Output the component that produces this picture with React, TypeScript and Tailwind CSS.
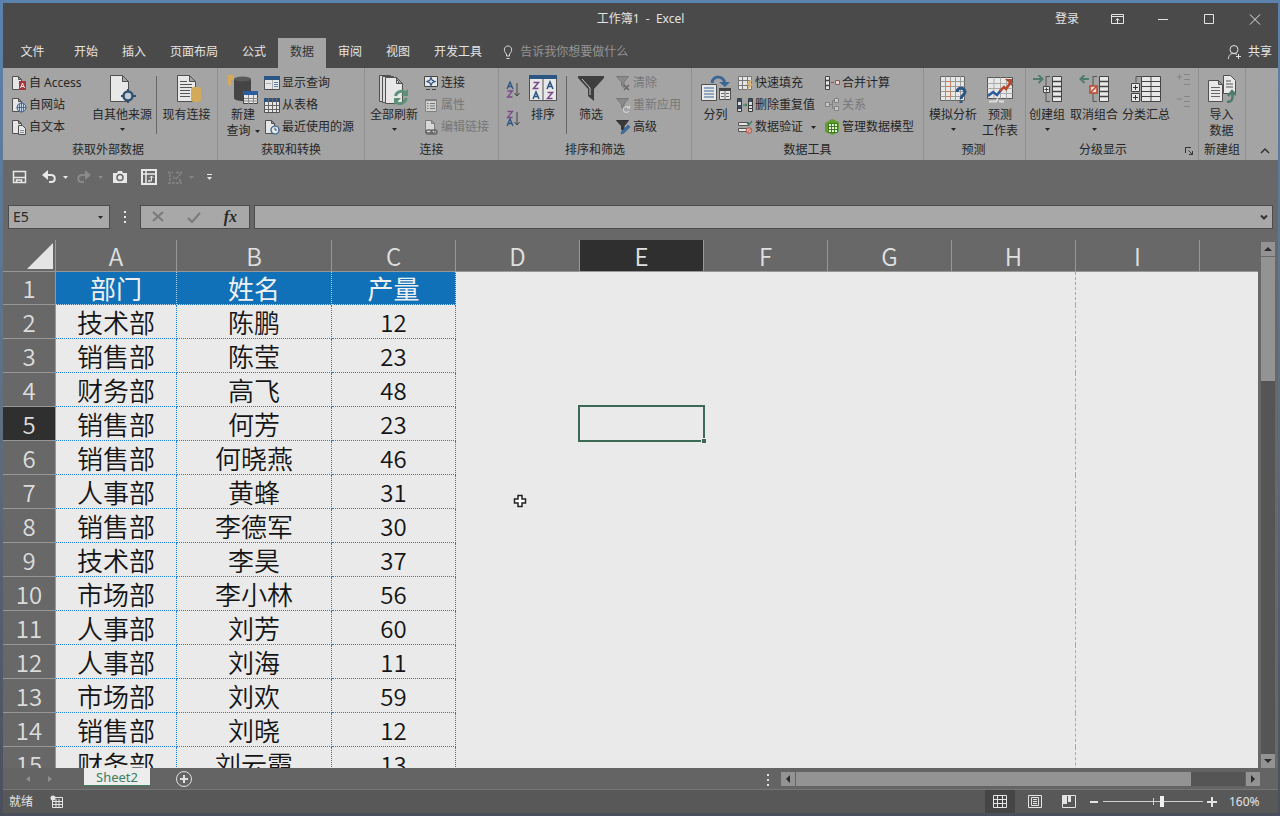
import React, { useState } from "react";

const COLUMNS = ["A", "B", "C", "D", "E", "F", "G", "H", "I", ""];

const ROWS: [string, string, string][] = [
  ["部门", "姓名", "产量"],
  ["技术部", "陈鹏", "12"],
  ["销售部", "陈莹", "23"],
  ["财务部", "高飞", "48"],
  ["销售部", "何芳", "23"],
  ["销售部", "何晓燕", "46"],
  ["人事部", "黄蜂", "31"],
  ["销售部", "李德军", "30"],
  ["技术部", "李昊", "37"],
  ["市场部", "李小林", "56"],
  ["人事部", "刘芳", "60"],
  ["人事部", "刘海", "11"],
  ["市场部", "刘欢", "59"],
  ["销售部", "刘晓", "12"],
  ["财务部", "刘云霞", "13"],
];

const TABS = ["开始", "插入", "页面布局", "公式", "数据", "审阅", "视图", "开发工具"];

type IconProps = { children: React.ReactNode; size?: number; className?: string };

function Icon({ children, size = 16, className = "" }: IconProps) {
  return (
    <svg
      width={size}
      height={size}
      viewBox={`0 0 ${size} ${size}`}
      fill="none"
      aria-hidden="true"
      className={`shrink-0 ${className}`}
    >
      {children}
    </svg>
  );
}

function Caret({ className = "" }: { className?: string }) {
  return (
    <svg width="5" height="3" viewBox="0 0 5 3" aria-hidden="true" className={`shrink-0 ${className}`}>
      <path d="M0 0h5L2.5 3z" fill="currentColor" />
    </svg>
  );
}

/* ---------- 16px ribbon icons ---------- */

const Page = () => <path d="M1.5 1.5h6l3 3v10h-9z M7.5 1.5v3h3" fill="#e6e6e6" stroke="#505050" />;

const AccessIcon = () => (
  <Icon>
    <Page />
    <rect x="8" y="6" width="7" height="9" fill="#a4373a" />
    <path d="M9.5 13l2-5 2 5M10.3 11.5h2.5" stroke="#eee" />
  </Icon>
);

const WebIcon = () => (
  <Icon>
    <Page />
    <circle cx="10.5" cy="10.5" r="4.5" fill="#c9d4df" stroke="#2f5b88" />
    <path d="M6 10.5h9M10.5 6v9M8.5 7v7M12.5 7v7" stroke="#2f5b88" strokeWidth=".8" />
  </Icon>
);

const TextIcon = () => (
  <Icon>
    <Page />
    <path d="M7.5 6.5h4l3 3v6h-7z" fill="#e6e6e6" stroke="#505050" />
    <path d="M9 11.5h4M9 13.5h4" stroke="#777" strokeWidth=".8" />
  </Icon>
);

const ShowQueryIcon = () => (
  <Icon>
    <path d="M.5 1.5h15v13H.5z" fill="#e6e6e6" stroke="#505050" />
    <path d="M0 1h16v4H0z" fill="#2b5583" />
    <path d="M10 7.5h4M10 9.5h4M10 11.5h4" stroke="#5b82a8" />
    <path d="M8.5 5v9M2 8.5h5" stroke="#aaa" />
  </Icon>
);

const TableIcon = () => (
  <Icon>
    <path d="M.5 1.5h15v14H.5z" fill="#e6e6e6" stroke="#505050" />
    <path d="M0 1h16v4H0z" fill="#2b5583" />
    <path d="M.5 8.5h15M.5 12.5h15M4.5 1v14M8.5 1v14M12.5 1v14" stroke="#666" />
  </Icon>
);

const RecentIcon = () => (
  <Icon>
    <Page />
    <circle cx="11" cy="11" r="4" fill="#e6e6e6" stroke="#2f5b88" strokeWidth="1.2" />
    <path d="M11 8.5V11h2" stroke="#2f5b88" />
  </Icon>
);

const LinkIcon = () => (
  <Icon>
    <path d="M1.5 1.5h13v10h-13z" fill="#e6e6e6" stroke="#454545" />
    <path d="M8 2.5l1.2 2.8L12 6.500 9.200 7.700 8 10.500 6.800 7.700 4 6.500l2.800-1.200z" stroke="#2b5583" strokeWidth="1.2" />
    <path d="M3 14.500h4M9 14.500h4" stroke="#454545" />
  </Icon>
);

const PropertiesIcon = () => (
  <Icon>
    <path d="M2.5 2.5h11v12h-11z" fill="#d0d0d0" stroke="#828282" />
    <path d="M2 3h12" stroke="#808080" strokeWidth="2" />
    <path d="M4 6.5h1.5M7 6.5h5M4 9h1.5M7 9h5M4 11.5h1.5M7 11.5h5" stroke="#777" />
  </Icon>
);

const EditLinksIcon = () => (
  <Icon>
    <path d="M2.5 1.5h6l3 3v9h-9z M8.5 1.5v3h3" fill="#d8d8d8" stroke="#7c7c7c" />
    <rect x="3" y="11" width="6" height="4" rx="2" stroke="#666" strokeWidth="1.5" />
    <rect x="8" y="11" width="6" height="4" rx="2" stroke="#666" strokeWidth="1.5" />
  </Icon>
);

const FUNNEL = "M1.5 1.5h12L9 7v5.5l-2.500-2V7z";

const ClearIcon = () => (
  <Icon>
    <path d={FUNNEL} fill="#8a8a8a" stroke="#777" />
    <path d="M9 10l5 5M14 10l-5 5" stroke="#666" strokeWidth="1.5" />
  </Icon>
);

const ReapplyIcon = () => (
  <Icon>
    <path d={FUNNEL} fill="#8a8a8a" stroke="#777" />
    <path d="M14 11a3 3 0 1 0 0 3M14.500 8.500V11H12" stroke="#d0d0d0" strokeWidth="1.2" />
  </Icon>
);

const AdvancedIcon = () => (
  <Icon>
    <path d={FUNNEL} fill="#3a3a3a" stroke="#333" />
    <path d="M6 15l1-3 6-6 2 2-6 6z" fill="#3c6ea5" stroke="#2b5583" strokeWidth=".6" />
  </Icon>
);

const FlashFillIcon = () => (
  <Icon>
    <path d="M1.5 1.5h13v13h-13z" fill="#e6e6e6" stroke="#777" />
    <path d="M1.5 5.5h13M1.5 10.5h13M5.5 1.5v13M10.5 1.5v13" stroke="#777" />
    <path d="M13 5l-4 5h3l-2 6 6-7h-3l2-4z" fill="#d9b26a" />
  </Icon>
);

const DedupeIcon = () => (
  <Icon>
    <path d="M.5 1.5h4v13h-4zM11.500 1.500h4v13h-4z" fill="#dcdcdc" stroke="#3c3c3c" />
    <path d="M1 2h3v3H1zM1 8h3v3H1zM12 2h3v3h-3z" fill="#3b4f66" />
    <path d="M12 8.500h3M12 11.500h3M1 11.500h3" stroke="#3c3c3c" />
    <path d="M6 8h4M8.500 6.500L10 8 8.500 9.500" stroke="#2b7a55" />
  </Icon>
);

const ValidationIcon = () => (
  <Icon>
    <path d="M1.5 3.5h10v3h-10zM1.5 9.5h10v3h-10z" fill="#e6e6e6" stroke="#555" />
    <path d="M10 4l2 2 3-4" stroke="#3b7d5c" strokeWidth="1.3" />
    <circle cx="12" cy="11.500" r="2.800" fill="#d9b5ab" stroke="#b5523b" />
    <path d="M10.200 13.500l3.600-4" stroke="#b5523b" />
  </Icon>
);

const ConsolidateIcon = () => (
  <Icon>
    <path d="M1.5 1.5h4v13h-4z" fill="#e6e6e6" stroke="#444" />
    <path d="M1.5 5.5h4M1.5 10.5h4" stroke="#444" strokeWidth="1.5" />
    <path d="M7 7.5h3" stroke="#a44" />
    <path d="M11.5 5.5h4v4h-4z" fill="#e2d5d3" stroke="#8d5a55" />
  </Icon>
);

const RelationIcon = () => (
  <Icon>
    <path d="M1.5 5.5h4v4h-4zM10.5 1.5h4v4h-4zM10.5 9.5h4v4h-4z" fill="#c8c8c8" stroke="#808080" />
    <path d="M6 7.5h2.5M10 3.5H8.5v8H10" stroke="#808080" />
  </Icon>
);

const DataModelIcon = () => (
  <Icon>
    <path d="M8 0l7 3v9l-6 4-8-3V4z" fill="#5f9e2f" />
    <path d="M4.5 4.5h9v9h-9z" fill="#e4eedb" stroke="#3f7a1d" />
    <path d="M4.5 7.5h9M4.5 10.5h9M7.5 4.5v9M10.5 4.5v9" stroke="#3f7a1d" />
  </Icon>
);

function SortIcon({ desc = false }: { desc?: boolean }) {
  return (
    <svg width="15" height="17" viewBox="0 0 15 17" fill="none" aria-hidden="true">
      <path
        d={desc ? "M1 16l3-7 3 7M2 13.5h4" : "M1 8l3-7 3 7M2 5.5h4"}
        stroke="#2b5583"
        strokeWidth="1.3"
      />
      <path d={desc ? "M1.5 1.500h5l-5 6h5" : "M1.5 10h5l-5 6h5"} stroke="#7a4a8c" strokeWidth="1.3" />
      <path d="M11 2v13M8.500 12l2.500 3 2.500-3" stroke="#444" />
    </svg>
  );
}

/* ---------- 28px ribbon icons ---------- */

const OtherSourcesIcon = () => (
  <Icon size={28}>
    <path d="M2.5.5h12l6 6v20h-18z M14.5.5v6h6" fill="#e8e8e8" stroke="#505050" />
    <path d="M20 14v14M13 21h15" stroke="#2f5170" strokeWidth="2" />
    <circle cx="20" cy="21" r="4.5" fill="#c3ccd4" stroke="#2f5170" strokeWidth="2.500" />
  </Icon>
);

const ExistingIcon = () => (
  <Icon size={28}>
    <path d="M4.5.5h12l6 6v20h-18z M16.5.5v6h6" fill="#e8e8e8" stroke="#505050" />
    <path d="M7 6.5h7M7 9.5h12M7 12.5h12M7 15.5h10M7 18.5h10M7 21.5h10" stroke="#555" />
    <rect x="18" y="12" width="10" height="15" rx="3" fill="#d3a95a" />
  </Icon>
);

const NewQueryIcon = () => (
  <Icon size={32}>
    <path d="M1 0h6v5H4v5H1z" fill="#d3a95a" />
    <path d="M7 4v19c0 2 4 3 9 3s8-1 8-3V4z" fill="#454545" />
    <ellipse cx="15.500" cy="4" rx="8.500" ry="2.500" fill="#5a5a5a" />
    <path d="M16.5 16.5h14v12h-14z" fill="#e8e8e8" stroke="#444" />
    <path d="M16 16h15v4H16z" fill="#2b5da0" />
    <path d="M17 23.500h14M17 26h14M21.500 20v9M26.500 20v9" stroke="#888" />
  </Icon>
);

const RefreshIcon = () => (
  <Icon size={30}>
    <path d="M.5.5h11l5 5v21H.5z" fill="#dcdcdc" stroke="#505050" />
    <path d="M3.5 1.5h11l5 5v21h-16z" fill="#dcdcdc" stroke="#505050" />
    <path d="M6.5 2.5h11l6 6v20h-17z M17.5 2.5v6h6" fill="#e8e8e8" stroke="#505050" />
    <path d="M16.500 21a6 6 0 0 1 10-3M27 23a6 6 0 0 1-10 4" stroke="#5d8f79" strokeWidth="3" />
    <path d="M29 14v7h-7zM15 30v-7h7z" fill="#5d8f79" />
  </Icon>
);

const SortDialogIcon = () => (
  <Icon size={28}>
    <path d="M.5.5h27v25H.5z" fill="#e8e8e8" stroke="#505050" />
    <path d="M0 0h28v4H0z" fill="#2b5583" />
    <path d="M14 4v22" stroke="#555" />
    <path d="M4.5 7.5h5l-5 6h5M18.5 17.5h5l-5 6h5" stroke="#7a4a8c" strokeWidth="1.5" />
    <path d="M4 24l3-7 3 7M5 21.5h4M18 14l3-7 3 7M19 11.5h4" stroke="#2b5583" strokeWidth="1.5" />
  </Icon>
);

const FilterIcon = () => (
  <Icon size={28}>
    <path d="M1 1h26v2L17 14v12l-6-5v-7L1 3z" fill="#3f3f3f" />
    <path d="M5 4l8 9v7" stroke="#c8c8c8" />
  </Icon>
);

const SplitIcon = () => (
  <Icon size={30}>
    <path d="M11 8c1-8 12-8 13 1" stroke="#3a6798" strokeWidth="3" />
    <path d="M18 7h11l-5 5z" fill="#3a6798" />
    <path d="M.5 9.5h15v16H.5zM18.5 13.5h11v11h-11z" fill="#e8e8e8" stroke="#505050" />
    <path d="M3 13h10M3 16h10M3 19h10M3 22h10" stroke="#3a6798" />
    <path d="M18 13h12v3H18z" fill="#444" />
    <path d="M24 16v9M20 18.5h3M20 21.5h3M25 18.5h3M25 21.5h3" stroke="#666" />
  </Icon>
);

const WhatIfIcon = () => (
  <Icon size={28}>
    <path d="M1.5 1.5h24v24h-24z" fill="#e8e8e8" stroke="#666" />
    <path d="M1.5 6.5h24M1.5 11.5h24M1.5 16.5h24M1.5 21.5h24M6.5 1.5v24M11.5 1.5v24M16.5 1.5v24M21.5 1.5v24" stroke="#9a9a9a" />
    <path d="M6.5 6.5h5v5h-5zM6.500 16.500h5v5h-5z" stroke="#c98256" />
    <path d="M18 17c0-5 8-5 8 0 0 3-4 3-4 7" stroke="#2b5583" strokeWidth="3" />
    <path d="M20.5 25.5h3V28h-3z" fill="#2b5583" />
  </Icon>
);

const ForecastIcon = () => (
  <Icon size={28}>
    <path d="M1.5 2.5h25v21h-25z" fill="#e8e8e8" stroke="#555" />
    <path d="M1.5 8.5h25M1.5 13.5h25M1.5 18.5h25M8 2.5v21M14.5 2.5v21M20.5 2.5v21" stroke="#aaa" />
    <path d="M2 21l5-4 4 3 4-5" stroke="#2b5da0" strokeWidth="2.5" />
    <path d="M14 16l4-4 2 2 5-7" stroke="#b8472b" strokeWidth="2.5" />
    <path d="M19 4h7v7z" fill="#b8472b" />
    <path d="M3 26.500h7l2-3M13 26.500h5" stroke="#ddd" strokeWidth="2" />
  </Icon>
);

const GroupIcon = () => (
  <Icon size={30}>
    <path d="M1 4h9M6.5 0l4 4-4 4" stroke="#4f7d69" strokeWidth="2" />
    <path d="M18 1.5h-4v25h4" stroke="#555" />
    <path d="M11.5 11.5h6v6h-6z" fill="#e8e8e8" stroke="#444" />
    <path d="M14.5 12.5v4M12.500 14.500h4" stroke="#444" />
    <path d="M20.5 1.5h9v25h-9z" fill="#e8e8e8" stroke="#444" />
    <path d="M20.5 6.5h9M20.5 11.5h9M20.5 16.5h9M20.5 21.5h9" stroke="#444" strokeWidth="1.5" />
  </Icon>
);

const UngroupIcon = () => (
  <Icon size={30}>
    <path d="M10 4H2M5.5 0l-4 4 4 4" stroke="#4f7d69" strokeWidth="2" />
    <path d="M18 1.5h-4v25h4" stroke="#555" />
    <path d="M11 11h7v7h-7z" fill="#e8dcd8" stroke="#b8472b" strokeWidth="1.5" />
    <path d="M12 17l5-5" stroke="#b8472b" strokeWidth="1.5" />
    <path d="M20.5 1.5h9v25h-9z" fill="#e8e8e8" stroke="#444" />
    <path d="M20.5 6.5h9M20.5 11.5h9M20.5 16.5h9M20.5 21.5h9" stroke="#444" strokeWidth="1.5" />
  </Icon>
);

const SubtotalIcon = () => (
  <Icon size={30}>
    <path d="M10 1.5H5v6" stroke="#555" />
    <path d="M10.5 1.5h19v25h-19z" fill="#e8e8e8" stroke="#444" />
    <path d="M10.5 6.5h19M10.5 11.5h19M10.5 16.5h19M10.5 21.5h19M20 1.5v25" stroke="#444" />
    <path d="M.5 8.5h8v8h-8zM.5 18.5h8v8h-8z" fill="#e8e8e8" stroke="#444" />
    <path d="M4.5 10v5M2 12.5h5M4.5 20v5M2 22.5h5" stroke="#333" />
  </Icon>
);

const ImportIcon = () => (
  <Icon size={28}>
    <path d="M15.5.5h7l5 5v13h-12z" fill="#e8e8e8" stroke="#505050" />
    <path d="M18 6h5M18 9h7M18 12h7" stroke="#555" />
    <path d="M.5 5.5h10l4 4v17H.5z M10.5 5.5v4h4" fill="#e8e8e8" stroke="#505050" />
    <path d="M3 12.5h9M3 15.5h9M3 18.5h9M3 21.5h9" stroke="#666" />
    <path d="M19 27c6 0 6-4 5-9M20 21l4-5 4 4" stroke="#4f7d69" strokeWidth="2.5" />
  </Icon>
);

/* ---------- ribbon pieces ---------- */

type LargeProps = { icon: React.ReactNode; label: string; second?: string; caret?: boolean; className?: string };

function LargeButton({ icon, label, second, caret, className = "" }: LargeProps) {
  return (
    <button type="button" className={`flex shrink-0 flex-col items-center whitespace-nowrap pt-[3px] ${className}`}>
      <span className="flex h-7 items-start justify-center">{icon}</span>
      <span className="mt-1 h-4 leading-4">{label}</span>
      <span className={`flex items-center gap-1 leading-4 ${second ? "h-4" : "h-3"}`}>
        {second}
        {caret && <Caret />}
      </span>
    </button>
  );
}

type SmallProps = { icon: React.ReactNode; label: string; disabled?: boolean; caret?: boolean };

function SmallButton({ icon, label, disabled, caret }: SmallProps) {
  return (
    <button
      type="button"
      disabled={disabled}
      className="flex h-[22px] items-center gap-[2px] whitespace-nowrap disabled:text-[#777]"
    >
      {icon}
      {label}
      {caret && <Caret className="ml-1.5" />}
    </button>
  );
}

type GroupProps = { title: string; children: React.ReactNode; className?: string; bodyClass?: string; titleClass?: string };

function Group({ title, children, className = "", bodyClass = "", titleClass = "" }: GroupProps) {
  return (
    <section aria-label={title} className={`flex shrink-0 flex-col border-r border-[#8f8f8f] pt-1 ${className}`}>
      <div className={`flex h-[66px] items-start ${bodyClass}`}>{children}</div>
      <div className={`h-[22px] text-center leading-6 ${titleClass}`}>{title}</div>
    </section>
  );
}

const Divider = ({ className = "" }: { className?: string }) => (
  <span className={`mt-1 h-[58px] w-px shrink-0 bg-[#666] ${className}`} />
);

function Ribbon() {
  return (
    <div className="flex h-[92px] overflow-hidden bg-[#a4a4a4] text-[12px] text-[#262626]">
      <Group title="获取外部数据" className="w-[215px]" bodyClass="pl-2" titleClass="pr-1">
        <div className="w-[77px]">
          <SmallButton icon={<AccessIcon />} label="自 Access" />
          <SmallButton icon={<WebIcon />} label="自网站" />
          <SmallButton icon={<TextIcon />} label="自文本" />
        </div>
        <LargeButton icon={<OtherSourcesIcon />} label="自其他来源" caret className="w-[68px]" />
        <Divider />
        <LargeButton icon={<ExistingIcon />} label="现有连接" className="w-[59px]" />
      </Group>
      <Group title="获取和转换" className="w-[147px]" bodyClass="pl-1">
        <LargeButton icon={<NewQueryIcon />} label="新建" second="查询" caret className="w-[42px]" />
        <div>
          <SmallButton icon={<ShowQueryIcon />} label="显示查询" />
          <SmallButton icon={<TableIcon />} label="从表格" />
          <SmallButton icon={<RecentIcon />} label="最近使用的源" />
        </div>
      </Group>
      <Group title="连接" className="w-[134px]" bodyClass="pl-1">
        <LargeButton icon={<RefreshIcon />} label="全部刷新" caret className="mr-1 w-[50px]" />
        <div>
          <SmallButton icon={<LinkIcon />} label="连接" />
          <SmallButton icon={<PropertiesIcon />} label="属性" disabled />
          <SmallButton icon={<EditLinksIcon />} label="编辑链接" disabled />
        </div>
      </Group>
      <Group title="排序和筛选" className="w-[193px]" bodyClass="pl-[7px]">
        <div className="flex w-[18px] flex-col gap-3 pt-[9px]">
          <button type="button" aria-label="升序">
            <SortIcon />
          </button>
          <button type="button" aria-label="降序">
            <SortIcon desc />
          </button>
        </div>
        <LargeButton icon={<SortDialogIcon />} label="排序" className="w-[38px]" />
        <Divider className="ml-1" />
        <LargeButton icon={<FilterIcon />} label="筛选" className="w-[48px]" />
        <div>
          <SmallButton icon={<ClearIcon />} label="清除" disabled />
          <SmallButton icon={<ReapplyIcon />} label="重新应用" disabled />
          <SmallButton icon={<AdvancedIcon />} label="高级" />
        </div>
      </Group>
      <Group title="数据工具" className="w-[232px]" bodyClass="pl-0.5">
        <LargeButton icon={<SplitIcon />} label="分列" className="w-[43px]" />
        <div className="w-[87px]">
          <SmallButton icon={<FlashFillIcon />} label="快速填充" />
          <SmallButton icon={<DedupeIcon />} label="删除重复值" />
          <SmallButton icon={<ValidationIcon />} label="数据验证" caret />
        </div>
        <div>
          <SmallButton icon={<ConsolidateIcon />} label="合并计算" />
          <SmallButton icon={<RelationIcon />} label="关系" disabled />
          <SmallButton icon={<DataModelIcon />} label="管理数据模型" />
        </div>
      </Group>
      <Group title="预测" className="w-[102px]" bodyClass="pl-0.5" titleClass="pr-0.5">
        <LargeButton icon={<WhatIfIcon />} label="模拟分析" caret className="w-[54px]" />
        <LargeButton icon={<ForecastIcon />} label="预测" second="工作表" className="w-10" />
      </Group>
      <Group title="分级显示" className="relative w-[173px]" titleClass="pr-[18px]">
        <LargeButton icon={<GroupIcon />} label="创建组" caret className="w-[42px]" />
        <LargeButton icon={<UngroupIcon />} label="取消组合" caret className="w-[52px]" />
        <LargeButton icon={<SubtotalIcon />} label="分类汇总" className="w-[52px]" />
        <div className="flex flex-col gap-1.5 pl-1 text-[#858585]">
          <button type="button" aria-label="显示明细数据" disabled>
            <Icon>
              <path d="M1 5h5M3.5 2.5v5M8 2.5h6M8 7.5h6M8 12.5h6" stroke="currentColor" />
            </Icon>
          </button>
          <button type="button" aria-label="隐藏明细数据" disabled>
            <Icon>
              <path d="M1 5h5M8 2.5h6M8 7.5h6M8 12.5h6" stroke="currentColor" />
            </Icon>
          </button>
        </div>
        <button type="button" aria-label="分级显示设置" className="absolute bottom-1 right-1">
          <Icon size={10}>
            <path d="M1.5 7V1.5H7M4.500 4.500l4 4M8.500 5v3.500H5" stroke="#333" />
          </Icon>
        </button>
      </Group>
      <Group title="新建组" className="w-[47px]">
        <LargeButton icon={<ImportIcon />} label="导入" second="数据" className="w-[45px]" />
      </Group>
      <div className="flex flex-1 items-end justify-end pb-1 pr-2">
        <button type="button" aria-label="折叠功能区">
          <Icon size={10}>
            <path d="M1 7l4-4 4 4" stroke="#333" strokeWidth="1.5" />
          </Icon>
        </button>
      </div>
    </div>
  );
}

function TitleBar() {
  return (
    <header className="grid h-[35px] grid-cols-[1fr_auto_1fr] items-center bg-[#4a4a4a] pb-1 text-[12px] text-[#e4e4e4]">
      <span />
      <h1 className="whitespace-pre">工作簿1  -  Excel</h1>
      <div className="flex items-center justify-end pr-[15px]">
        <button type="button" className="mr-[30px]">
          登录
        </button>
        <div className="flex gap-[30px]">
          <button type="button" aria-label="功能区显示选项">
            <Icon>
              <path d="M2.5 3.5h12v9h-12zM2.5 5.5h12M8.5 12V7.5M6.5 9.5l2-2 2 2" stroke="currentColor" />
            </Icon>
          </button>
          <button type="button" aria-label="最小化">
            <Icon>
              <path d="M3 8.5h10" stroke="currentColor" />
            </Icon>
          </button>
          <button type="button" aria-label="最大化">
            <Icon>
              <path d="M3.5 3.5h9v9h-9z" stroke="currentColor" />
            </Icon>
          </button>
          <button type="button" aria-label="关闭">
            <Icon>
              <path d="M3 3.5l10 10M13 3.5l-10 10" stroke="currentColor" />
            </Icon>
          </button>
        </div>
      </div>
    </header>
  );
}

function TabBar() {
  const [active, setActive] = useState("数据");
  return (
    <nav className="flex h-[30px] bg-[#4a4a4a] text-[12px] text-[#e4e4e4]">
      <button type="button" className="w-[59px] pb-0.5">
        文件
      </button>
      {TABS.map((tab) => (
        <button
          key={tab}
          type="button"
          onClick={() => setActive(tab)}
          className={`px-3 pb-0.5 ${tab === active ? "bg-[#a4a4a4] text-[#333]" : ""}`}
        >
          {tab}
        </button>
      ))}
      <label className="ml-1.5 flex min-w-0 flex-1 items-center gap-1 pb-0.5">
        <Icon>
          <path d="M6.5 12v-2C3 7 4 2 8 2s5 5 1.500 8v2zM6.500 14.500h3" stroke="#d8d8d8" />
        </Icon>
        <input
          type="text"
          aria-label="告诉我你想要做什么"
          placeholder="告诉我你想要做什么"
          className="w-[140px] bg-transparent outline-none placeholder:text-[#949494]"
        />
      </label>
      <button type="button" className="flex items-center gap-1.5 pb-0.5 pr-1.5">
        <Icon>
          <circle cx="8" cy="5.5" r="4" stroke="currentColor" />
          <path d="M2.5 15c0-4 2-5.500 5.500-5.500 1.500 0 2.500.5 3 1M12.500 10v5M10 12.500h5" stroke="currentColor" />
        </Icon>
        共享
      </button>
    </nav>
  );
}

function QuickAccess() {
  return (
    <div className="flex h-[34px] items-center pl-2 text-[#e8e8e8]">
      <button type="button" aria-label="保存">
        <Icon>
          <path d="M2.5 2.5h12v11h-12z" stroke="currentColor" strokeWidth="1.5" />
          <path d="M3 8.5h11M5.500 14v-3h5v3" stroke="currentColor" strokeWidth="1.5" />
        </Icon>
      </button>
      <button type="button" aria-label="撤消" className="ml-3.5 flex items-center gap-1.5">
        <Icon>
          <path d="M3 6h7c5 0 5 7 0 7H8" stroke="currentColor" strokeWidth="2" />
          <path d="M7 1v10L1 6z" fill="currentColor" />
        </Icon>
        <Caret />
      </button>
      <button type="button" aria-label="恢复" disabled className="ml-2 flex items-center gap-1.5 text-[#8a8a8a]">
        <Icon>
          <path d="M13 6H6c-5 0-5 7 0 7h2" stroke="currentColor" strokeWidth="2" />
          <path d="M9 1v10l6-5z" fill="currentColor" />
        </Icon>
        <Caret />
      </button>
      <button type="button" aria-label="照相机" className="ml-[9px]">
        <Icon>
          <path d="M1 4h4l1-2h4l1 2h4v10H1z" fill="currentColor" />
          <circle cx="8" cy="8.5" r="3" stroke="#686868" strokeWidth="1.5" />
        </Icon>
      </button>
      <button type="button" aria-label="数据透视表" className="ml-[13px]">
        <Icon>
          <path d="M1 1h14v14H1z" stroke="currentColor" strokeWidth="2" />
          <path d="M2 5h12M5 2v12" stroke="currentColor" strokeWidth="1.5" />
          <path d="M7 12h3.500V7M8.500 9l2-2 2 2M9 10.500L7.500 12 9 13.500" stroke="currentColor" />
        </Icon>
      </button>
      <button type="button" aria-label="编辑形状" disabled className="ml-2.5 flex items-center gap-1.5 text-[#868686]">
        <Icon>
          <path d="M1 3.5h5M9 3.5h6M1 14h14M3 5v8M13 10v3M6 8l3 2 6-7" stroke="currentColor" strokeWidth="1.5" strokeDasharray="3 1" />
        </Icon>
        <Caret />
      </button>
      <button type="button" aria-label="自定义快速访问工具栏" className="ml-[13px] flex flex-col items-center gap-0.5">
        <span className="h-px w-[5px] bg-current" />
        <Caret />
      </button>
    </div>
  );
}

function FormulaBar({ cell }: { cell: string }) {
  return (
    <div className="flex h-[26px] shrink-0 items-center px-[5px] text-[#2a2a2a]">
      <label className="flex h-6 w-[102px] items-center border border-[#4c4c4c] bg-[#a8a8a8] pr-1.5">
        <input
          aria-label="名称框"
          defaultValue={cell}
          className="min-w-0 flex-1 bg-transparent pl-1 text-[14px] leading-5 outline-none"
        />
        <Caret />
      </label>
      <span className="mx-[14px] flex flex-col gap-[3px]">
        <i className="size-[2px] bg-[#e8e8e8]" />
        <i className="size-[2px] bg-[#e8e8e8]" />
        <i className="size-[2px] bg-[#e8e8e8]" />
      </span>
      <div className="flex h-6 w-[110px] items-center justify-between border border-[#4c4c4c] bg-[#a8a8a8] px-2.5">
        <button type="button" aria-label="取消" disabled className="text-[#7a7a7a]">
          <Icon size={14}>
            <path d="M2 2l10 9M12 2l-10 9" stroke="currentColor" strokeWidth="2" />
          </Icon>
        </button>
        <button type="button" aria-label="输入" disabled className="text-[#7a7a7a]">
          <Icon size={14}>
            <path d="M1 8l4 4 8-9" stroke="currentColor" strokeWidth="2" />
          </Icon>
        </button>
        <button type="button" className="pr-0.5 text-[16px] font-bold italic leading-5 [font-family:'Liberation_Serif',serif]">
          fx
        </button>
      </div>
      <label className="ml-1 flex h-6 flex-1 items-center border border-[#4c4c4c] bg-[#a8a8a8] pr-1">
        <input aria-label="编辑栏" className="min-w-0 flex-1 bg-transparent px-1 text-[14px] outline-none" />
        <Icon size={8}>
          <path d="M1 2.5l3 3 3-3" stroke="#333" strokeWidth="2" />
        </Icon>
      </label>
    </div>
  );
}

function Sheet() {
  return (
    <table className="w-full table-fixed border-separate border-spacing-0 text-center font-[350] [font-family:'Noto_Sans_CJK_SC',sans-serif]">
      <colgroup>
        <col className="w-[53px]" />
        <col className="w-[121px]" />
        <col className="w-[155px]" />
        <col className="w-[124px]" />
        <col className="w-[124px]" />
        <col className="w-[124px]" />
        <col className="w-[124px]" />
        <col className="w-[124px]" />
        <col className="w-[124px]" />
        <col className="w-[124px]" />
        <col />
      </colgroup>
      <thead>
        <tr className="h-8 text-[24px] leading-7 text-[#e0e0e0]">
          <th aria-label="全选" className="border-b border-r border-[#989898] p-0">
            <svg width="26" height="26" viewBox="0 0 26 26" className="ml-auto mr-0.5" aria-hidden="true">
              <path d="M26 0v26H0z" fill="#e4e4e4" />
            </svg>
          </th>
          {COLUMNS.map((col, i) => (
            <th
              key={i}
              scope="col"
              className={`border-b border-r border-[#989898] p-0 font-[350] ${col === "E" ? "bg-[#2f2f2f]" : ""} ${
                col === "" ? "border-r-transparent" : ""
              }`}
            >
              {col}
            </th>
          ))}
        </tr>
      </thead>
      <tbody className="bg-[#eaeaea] text-[26px] text-[#151515]">
        {ROWS.map((row, r) => (
          <tr key={r} className={r === 0 ? "h-[33px] leading-8" : "h-[34px] leading-[33px]"}>
            <th
              scope="row"
              className={`border-b border-r border-[#989898] p-0 text-[24px] font-[350] text-[#dcdcdc] ${
                r === 4 ? "bg-[#2f2f2f]" : "bg-[#686868]"
              }`}
            >
              {r + 1}
            </th>
            {row.map((value, c) => (
              <td
                key={c}
                className={`border-b border-r border-dotted p-0 ${
                  r === 0
                    ? "border-[#b4d2ea] bg-[#1070b8] bg-clip-border font-normal text-[#f0f0f0]"
                    : "border-[#1f7fd6]"
                } ${c === 2 && r > 0 ? "text-[24px]" : ""}`}
              >
                {value}
              </td>
            ))}
            <td className="relative p-0">
              {r === 6 && (
                <svg width="16" height="16" viewBox="0 0 16 16" className="absolute left-[56px] top-[18px]" aria-hidden="true">
                  <path d="M6 2.5h4V6h3.500v4H10v3.500H6V10H2.500V6H6z" fill="#fff" stroke="#222" strokeWidth="1.5" />
                </svg>
              )}
            </td>
            <td className="relative p-0">
              {r === 4 && (
                <span className="absolute -left-0.5 -right-px -top-0.5 bottom-[-1px] border-2 border-[#3b6b57]">
                  <i className="absolute -bottom-[3px] -right-[3px] size-[5px] border-l border-t border-[#eaeaea] bg-[#3b6b57]" />
                </span>
              )}
            </td>
            <td />
            <td />
            <td className="border-r border-dashed border-[#a8a8a8]" />
            <td />
            <td />
          </tr>
        ))}
      </tbody>
    </table>
  );
}

function ScrollButton({ label, d }: { label: string; d: string }) {
  return (
    <button
      type="button"
      aria-label={label}
      className="flex size-[14px] shrink-0 items-center justify-center bg-[#939393] text-[#2c2c2c]"
    >
      <Icon size={8}>
        <path d={d} fill="currentColor" />
      </Icon>
    </button>
  );
}

function SheetTabs() {
  return (
    <div className="flex h-[22px] shrink-0 items-start border-b border-[#777] bg-[#646464]">
      <div className="flex w-[81px] gap-3 pl-5 pt-1.5 text-[#909090]">
        <button type="button" aria-label="上一个工作表">
          <Icon size={10}>
            <path d="M7 2v6L3 5z" fill="currentColor" />
          </Icon>
        </button>
        <button type="button" aria-label="下一个工作表">
          <Icon size={10}>
            <path d="M3 2v6l4-3z" fill="currentColor" />
          </Icon>
        </button>
      </div>
      <button
        type="button"
        className="h-[18px] w-[66px] border-b border-[#3b7d5c] bg-[#ededed] text-[13px] leading-4 text-[#3f7d60]"
      >
        Sheet2
      </button>
      <button type="button" aria-label="新工作表" className="ml-[25px] pt-[2px] text-[#e0e0e0]">
        <Icon size={18}>
          <circle cx="9" cy="9" r="7.5" stroke="currentColor" />
          <path d="M9 5v8M5 9h8" stroke="currentColor" strokeWidth="2" />
        </Icon>
      </button>
      <div className="flex-1" />
      <span className="mr-3 flex flex-col gap-[3px] pt-1.5">
        <i className="size-[2px] bg-[#e0e0e0]" />
        <i className="size-[2px] bg-[#e0e0e0]" />
        <i className="size-[2px] bg-[#e0e0e0]" />
      </span>
      <div className="flex w-[39%] pr-[18px] pt-1">
        <ScrollButton label="向左滚动" d="M6 0v8L2 4z" />
        <div className="mx-px flex-1 bg-[#555]">
          <div className="h-[14px] w-[88%] bg-[#939393]" />
        </div>
        <ScrollButton label="向右滚动" d="M2 0v8l4-4z" />
      </div>
    </div>
  );
}

function StatusBar() {
  const [zoom, setZoom] = useState(59);
  return (
    <footer className="flex h-[23px] shrink-0 items-center bg-[#585858] pl-1.5 text-[12px] text-[#e4e4e4]">
      <span>就绪</span>
      <button type="button" aria-label="录制宏" className="ml-4">
        <Icon>
          <path d="M3.5 3.5h10v10h-10zM4 7.5h9M4 10.5h9M7 5v8M10 5v8" stroke="currentColor" />
          <circle cx="4" cy="4" r="2.5" fill="currentColor" />
        </Icon>
      </button>
      <div className="flex-1" />
      <button type="button" aria-label="普通" className="flex h-full w-[30px] items-center justify-center bg-[#454545]">
        <Icon>
          <path d="M1.5 1.5h13v12h-13zM1.5 5.5h13M1.5 9.5h13M5.5 1.5v12M10.5 1.5v12" stroke="currentColor" />
        </Icon>
      </button>
      <button type="button" aria-label="页面布局" className="ml-3">
        <Icon>
          <path d="M1.5 1.5h13v12h-13zM4.5 3.5h7v8h-7zM6 5.5h4M6 7.5h4M6 9.5h4" stroke="currentColor" />
        </Icon>
      </button>
      <button type="button" aria-label="分页预览" className="ml-[18px]">
        <Icon>
          <path d="M1.5 1.5h13v12h-13z" stroke="currentColor" />
          <path d="M2 2h4v8H2zM7 2h3v6H7z" fill="currentColor" />
        </Icon>
      </button>
      <button type="button" aria-label="缩小" className="ml-3">
        <Icon size={10}>
          <path d="M1 5h8" stroke="currentColor" strokeWidth="2" />
        </Icon>
      </button>
      <label className="relative ml-1 flex w-[100px] items-center">
        <span className="absolute left-1/2 h-[7px] w-px bg-[#cfcfcf]" />
        <input
          type="range"
          aria-label="缩放"
          value={zoom}
          onChange={(e) => setZoom(Number(e.target.value))}
          className="h-px w-full appearance-none bg-[#cfcfcf] [&::-webkit-slider-thumb]:h-[11px] [&::-webkit-slider-thumb]:w-1 [&::-webkit-slider-thumb]:appearance-none [&::-webkit-slider-thumb]:bg-[#f0f0f0]"
        />
      </label>
      <button type="button" aria-label="放大" className="ml-1">
        <Icon size={10}>
          <path d="M0 5h10M5 0v10" stroke="currentColor" strokeWidth="2" />
        </Icon>
      </button>
      <span className="w-[61px] pl-3">160%</span>
    </footer>
  );
}

export default function App() {
  return (
    <div className="h-screen bg-gradient-to-b from-[#5b82ad] via-[#5f6f80] to-[#4a4f5c] py-[3px] pl-[3px] pr-0.5 [font-family:'Noto_Sans','Noto_Sans_CJK_SC',sans-serif]">
      <div className="flex h-full flex-col bg-[#686868]">
        <TitleBar />
        <TabBar />
        <Ribbon />
        <QuickAccess />
        <div className="pt-2.5">
          <FormulaBar cell="E5" />
        </div>
        <div className="flex min-h-0 flex-1 pt-[10px]">
          <div className="min-w-0 flex-1 overflow-hidden">
            <Sheet />
          </div>
          <div className="flex w-5 flex-col items-center pt-0.5">
            <ScrollButton label="向上滚动" d="M0 6h8L4 2z" />
            <div className="mt-px flex-1 bg-[#555]">
              <div className="h-1/4 w-[14px] bg-[#939393]" />
            </div>
            <ScrollButton label="向下滚动" d="M0 2h8L4 6z" />
          </div>
        </div>
        <SheetTabs />
        <StatusBar />
      </div>
    </div>
  );
}
